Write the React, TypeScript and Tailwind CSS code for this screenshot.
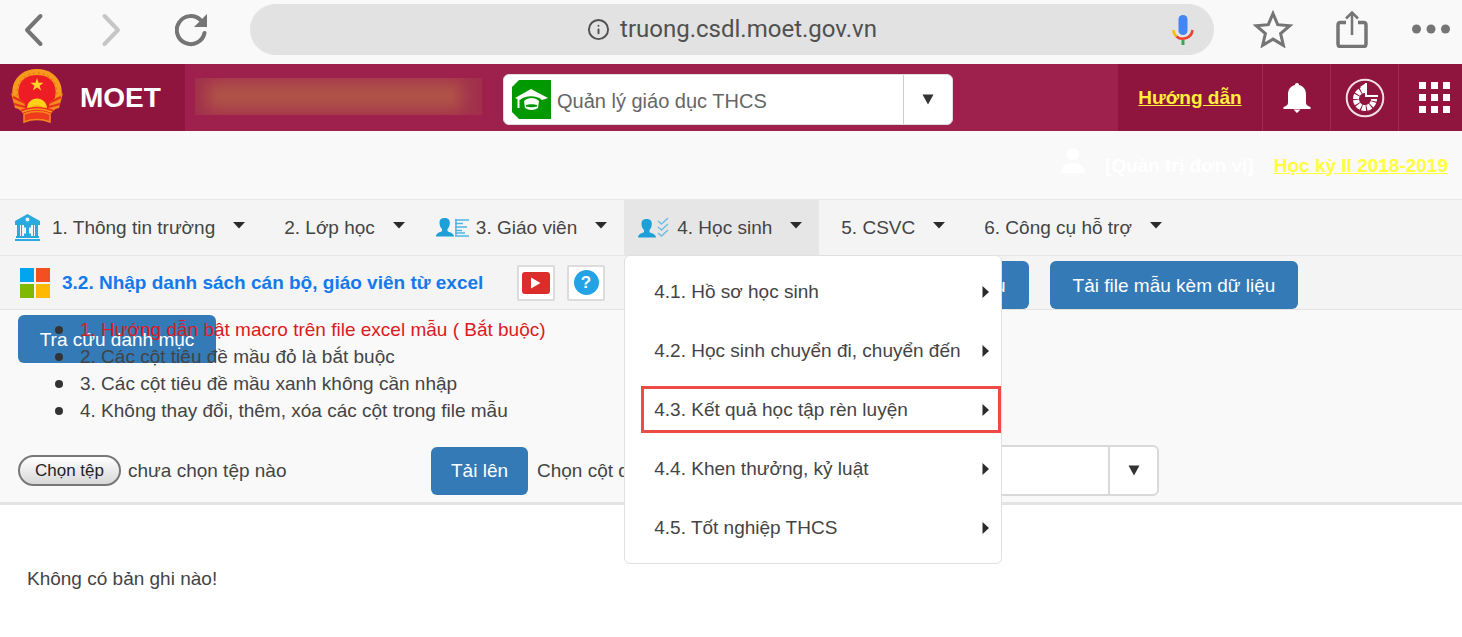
import { useState } from "react";
import { Info } from "lucide-react";

const menuItems = [
  "4.1. Hồ sơ học sinh",
  "4.2. Học sinh chuyển đi, chuyển đến",
  "4.3. Kết quả học tập rèn luyện",
  "4.4. Khen thưởng, kỷ luật",
  "4.5. Tốt nghiệp THCS",
];

const notes = [
  "1. Hướng dẫn bật macro trên file excel mẫu ( Bắt buộc)",
  "2. Các cột tiêu đề mầu đỏ là bắt buộc",
  "3. Các cột tiêu đề mầu xanh không cần nhập",
  "4. Không thay đổi, thêm, xóa các cột trong file mẫu",
];

function Caret() {
  return (
    <svg width="12" height="7" viewBox="0 0 12 7" className="mb-1 shrink-0" aria-hidden="true">
      <path d="M0 0h12L6 6.5z" fill="#2b2b2b" />
    </svg>
  );
}

function SelectArrow() {
  return (
    <svg width="12" height="11" viewBox="0 0 12 11" aria-hidden="true">
      <path d="M0.5 0.5h11L6 10.5z" fill="#333" />
    </svg>
  );
}

function Emblem() {
  return (
    <svg width="54" height="54" viewBox="0 0 54 54" className="mb-1" aria-hidden="true">
      <circle cx="27" cy="24" r="21" fill="#ee1c25" />
      <path d="M13 40C-1 28 4 3 27 3s28 25 14 37" fill="none" stroke="#f79a1c" strokeWidth="6" />
      <path d="M11 36C2 24 9 4 27 4s25 20 16 32" fill="none" stroke="#e8641a" strokeWidth="1" strokeDasharray="2 3" />
      <path d="M27 9l1.600 4.700h5l-4 3 1.500 4.800-4.100-2.900-4.100 2.900 1.500-4.800-4-3h5z" fill="#ffd52b" />
      <path d="M1 24l13 9 2 9-11-3zM53 24l-13 9-2 9 11-3z" fill="#f58a1c" />
      <path d="M3 28l12 6M4 35l11 3M51 28l-12 6M50 35l-11 3" stroke="#e8301c" strokeWidth="2" />
      <path d="M17 40c0-14 20-14 20 0z" fill="#ffd21a" />
      <path d="M20 40c3-5 11-5 14 0z" fill="#ff9c1a" />
      <path d="M10 41c11-4 23-4 34 0l-3 4H13z" fill="#ee2c1c" />
      <path d="M14 45c8-3 18-3 26 0v8c-8-3-18-3-26 0z" fill="#ee3c1c" stroke="#f58a1c" strokeWidth="1.500" />
      <path d="M12 43c10-4 20-4 30 0" fill="none" stroke="#f79a1c" strokeWidth="1.500" />
    </svg>
  );
}

function SchoolIcon() {
  return (
    <svg width="25" height="27" viewBox="0 0 25 27" className="mr-3 shrink-0" fill="#29a9e0" aria-hidden="true">
      <path fillRule="evenodd" d="M12.500 0L25 7v4H0V7zM12.500 3.500a2 2 0 100 4 2 2 0 000-4z" />
      <path d="M2 11h3v11H2zM20 11h3v11h-3zM1 22h23v2H1zM0 25h25v2H0zM6 11h1v11H6zM18 11h1v11h-1z" />
      <path d="M9 11h7v2.500h-2v6h2V22H9v-2.500h2v-6H9z" />
    </svg>
  );
}

function Bust() {
  return (
    <path
      d="M8.500 0C12 0 14 1.800 13.800 5c0 3-1.300 5-2.300 6v2c1 1.500 6.500 1.500 6.500 5.500H0C0 14.500 4.500 14.500 6 13v-2C4.800 10 3.500 8 3.500 5 3.300 1.800 5 0 8.500 0z"
      fill="#1d9fd8"
    />
  );
}

function TeacherIcon() {
  return (
    <svg width="34" height="19" viewBox="0 0 34 19" className="mr-[6px] shrink-0" aria-hidden="true">
      <Bust />
      <path d="M19 2h14M19 5.500h8M19 9h12M19 12.500h7M19 15h10M19 18h14M20 1v17" stroke="#4db5e4" strokeWidth="1.500" />
    </svg>
  );
}

function StudentIcon() {
  return (
    <svg width="31" height="21" viewBox="0 0 31 21" className="mr-2 shrink-0" aria-hidden="true">
      <g transform="translate(0 2)">
        <Bust />
      </g>
      <path d="M20 4l3.500 3L30 1M20 10l3.500 3L30 7M20 16l3.500 3L30 13" fill="none" stroke="#6cbfe4" strokeWidth="1.500" />
    </svg>
  );
}

function BrowserBar() {
  return (
    <div className="flex h-16 items-start bg-[#f9f9f9]">
      <div className="flex h-[59px] w-[250px] shrink-0 items-center pl-6">
        <button aria-label="Back">
          <svg width="20" height="34" viewBox="0 0 20 34" fill="none" stroke="#757575" strokeWidth="4" strokeLinecap="round" strokeLinejoin="round">
            <path d="M16.500 3L3 17l13.500 14" />
          </svg>
        </button>
        <button aria-label="Forward" className="ml-[57px]">
          <svg width="20" height="34" viewBox="0 0 20 34" fill="none" stroke="#c6c6c6" strokeWidth="4" strokeLinecap="round" strokeLinejoin="round">
            <path d="M3.500 3L17 17 3.500 31" />
          </svg>
        </button>
        <button aria-label="Reload" className="ml-[54px]">
          <svg width="33" height="34" viewBox="0 0 33 34">
            <path d="M29.500 20A14 14 0 1 1 26 7.500" fill="none" stroke="#757575" strokeWidth="4" strokeLinecap="round" />
            <path d="M32 1v13H19z" fill="#757575" />
          </svg>
        </button>
      </div>
      <div className="mt-1 flex h-[51px] flex-1 items-center rounded-full bg-[#e2e2e2] pl-[42px] pr-5">
        <div className="flex flex-1 items-center justify-center gap-[10px] text-[#505050]">
          <Info size={23} strokeWidth={2} />
          <span className="font-[family-name:Roboto,sans-serif] text-[24px]">truong.csdl.moet.gov.vn</span>
        </div>
        <button aria-label="Voice search">
          <svg width="22" height="32" viewBox="0 0 22 32" fill="none">
            <rect x="6.500" y="1" width="9" height="20" rx="4.500" fill="#4285f4" />
            <path d="M1.500 16c0 3 1.200 5 3 6.500" stroke="#fbbc05" strokeWidth="2.500" />
            <path d="M4.500 22.500c4 3.600 15 3.200 16-6.500" stroke="#ea4335" strokeWidth="2.500" />
            <path d="M11 26v5" stroke="#34a853" strokeWidth="3" />
          </svg>
        </button>
      </div>
      <div className="flex h-[58px] shrink-0 items-center pl-[39px] pr-3">
        <button aria-label="Bookmark">
          <svg width="40" height="38" viewBox="0 0 40 38" fill="none" stroke="#757575" strokeWidth="3">
            <path d="M20 3.500l4.700 11.200 12.100 1-9.200 7.900 2.800 11.800L20 29.100 9.600 35.400l2.800-11.800-9.200-7.900 12.100-1z" />
          </svg>
        </button>
        <button aria-label="Share" className="ml-[43px]">
          <svg width="32" height="38" viewBox="0 0 32 38" fill="none" stroke="#757575" strokeWidth="3.500">
            <path d="M10 12.500H4.500Q2 12.500 2 15v19q0 2.500 2.500 2.500h23Q30 36.500 30 34V15q0-2.500-2.500-2.500H22" />
            <path d="M16 25V3M10 8.500L16 2.500l6 6" strokeWidth="2.500" />
          </svg>
        </button>
        <button aria-label="More" className="ml-11">
          <svg width="38" height="10" viewBox="0 0 38 10" fill="#757575">
            <circle cx="4.500" cy="5" r="4.500" />
            <circle cx="19" cy="5" r="4.500" />
            <circle cx="33.500" cy="5" r="4.500" />
          </svg>
        </button>
      </div>
    </div>
  );
}

function Header() {
  return (
    <header className="flex h-[67px] items-stretch bg-[#9e214d]">
      <div className="flex w-[185px] shrink-0 items-center gap-4 bg-[#8f153f] pl-[10px] text-[28px] font-bold text-white">
        <Emblem />
        <span>MOET</span>
      </div>
      <div className="ml-[10px] mt-[14px] h-[37px] w-[287px] shrink-0 overflow-hidden bg-[#a2304c]">
        <div className="ml-3 mr-5 mt-1 h-7 bg-[#b05448] blur-[8px]" />
      </div>
      <div className="ml-[21px] mt-1 flex h-[51px] w-[450px] shrink-0 items-center self-center rounded-md border border-[#ddd] bg-white">
        <svg width="39" height="39" viewBox="0 0 39 39" className="ml-2 shrink-0" aria-hidden="true">
          <path d="M7 0h32v39H7L0 32V7z" fill="#009a00" />
          <path d="M3 18L19 9l17 9-6 2c-5-5-17-5-22 0z" fill="#fff" />
          <path d="M12 21c4-4 11-4 15 0l-1 7c-4 2.500-9 2.500-13 0zM14 26.500c3 1 8 1 11 0v-1.500c-3-1-8-1-11 0z" fill="#fff" fillRule="evenodd" />
          <path d="M6.500 19v9" stroke="#fff" strokeWidth="2" />
        </svg>
        <select aria-label="Phân hệ" className="h-full flex-1 appearance-none bg-transparent pl-[6px] pt-1 text-[20px] text-[#666]">
          <option>Quản lý giáo dục THCS</option>
        </select>
        <div className="pointer-events-none flex h-full w-[49px] items-center justify-center border-l border-[#ccc]">
          <SelectArrow />
        </div>
      </div>
      <div className="ml-auto flex bg-[#8f153f]">
        <div className="flex w-36 items-center justify-center">
          <a href="#huong-dan" className="text-[19px] font-bold text-[#ffee3a] underline">
            Hướng dẫn
          </a>
        </div>
        <button aria-label="Thông báo" className="flex w-[68px] items-center justify-center border-l border-[#9e2b53]">
          <svg width="28" height="30" viewBox="0 0 28 30" fill="#fff">
            <path d="M14 0c1.300 0 2 .8 2 2 4.500 1 7 4.500 7 9.500V20c0 1.800 1.500 3 4.500 4v2h-27v-2c3-1 4.500-2.200 4.500-4v-8.500C5 6.500 7.500 3 12 2c0-1.200.7-2 2-2zM10.500 26.500h7L14 30z" />
          </svg>
        </button>
        <button aria-label="Thống kê" className="flex w-[68px] items-center justify-center border-l border-[#9e2b53]">
          <svg width="40" height="40" viewBox="0 0 40 40" fill="none" stroke="#f3dfe6">
            <circle cx="20" cy="20" r="18.300" strokeWidth="2" />
            <path d="M20 12a9 9 0 1 0 9 9" strokeWidth="6" strokeDasharray="4 1" stroke="#fff" />
            <path d="M21 5v13h12" strokeWidth="2" stroke="#fff" />
            <path d="M15 9l6-4v9z" fill="#fff" stroke="none" />
          </svg>
        </button>
        <button aria-label="Ứng dụng" className="flex w-16 items-center justify-center border-l border-[#9e2b53] pl-2">
          <svg width="31" height="31" viewBox="0 0 31 31" fill="#fff">
            <path d="M0 0h7v7H0zM12 0h7v7h-7zM24 0h7v7h-7zM0 12h7v7H0zM12 12h7v7h-7zM24 12h7v7h-7zM0 24h7v7H0zM12 24h7v7h-7zM24 24h7v7h-7z" />
          </svg>
        </button>
      </div>
    </header>
  );
}

export default function App() {
  const [fileName, setFileName] = useState("");

  return (
    <div className="bg-white font-['Liberation_Sans',Arial,sans-serif] text-[19px] leading-[27px] text-[#444]">
      <BrowserBar />
      <Header />

      <div className="flex h-[68px] items-center justify-end bg-[#f9f9f9] pr-[14px] font-bold">
        <svg width="24" height="26" viewBox="0 0 24 26" fill="#fff" className="mb-2 mr-5 shrink-0" aria-hidden="true">
          <circle cx="12" cy="6" r="6" />
          <path d="M0 25c0-7 5-10 12-10s12 3 12 10z" />
        </svg>
        <span className="mr-5 text-white">[Quản trị đơn vị]</span>
        <a href="#hoc-ky" className="text-[#ffff3c] underline">
          Học kỳ II 2018-2019
        </a>
      </div>

      <nav className="flex h-[57px] border-y border-[#e6e6e6] bg-[#f4f4f4]">
        <button className="flex items-center pl-[15px] pr-[17px]">
          <SchoolIcon />
          <span className="mr-[18px]">1. Thông tin trường</span>
          <Caret />
        </button>
        <button className="flex items-center pl-[22px] pr-[17px]">
          <span className="mr-[18px]">2. Lớp học</span>
          <Caret />
        </button>
        <button className="flex items-center pl-[14px] pr-[17px]">
          <TeacherIcon />
          <span className="mr-[18px]">3. Giáo viên</span>
          <Caret />
        </button>
        <div className="relative flex">
          <button className="flex items-center bg-[#e6e6e6] pl-[14px] pr-[17px]">
            <StudentIcon />
            <span className="mr-[18px]">4. Học sinh</span>
            <Caret />
          </button>
          <div className="absolute left-0 top-full z-10 flex w-[378px] flex-col gap-3 rounded-md border border-[#e0e0e0] bg-white py-3">
            {menuItems.map((item, i) => (
              <a
                key={item}
                href={`#muc-${i + 1}`}
                className={`ml-4 flex h-[47px] items-center justify-between border-[3px] pl-[10px] pr-[9px] whitespace-nowrap ${
                  i === 2 ? "border-[#ee4b47]" : "border-transparent"
                }`}
              >
                {item}
                <svg width="7" height="12" viewBox="0 0 7 12" aria-hidden="true">
                  <path d="M0.500 0v12L7 6z" fill="#2b2b2b" />
                </svg>
              </a>
            ))}
          </div>
        </div>
        <button className="flex items-center pl-[22px] pr-[17px]">
          <span className="mr-[18px]">5. CSVC</span>
          <Caret />
        </button>
        <button className="flex items-center pl-[22px] pr-[17px]">
          <span className="mr-[18px]">6. Công cụ hỗ trợ</span>
          <Caret />
        </button>
      </nav>

      <div className="flex h-[54px] items-center border-b border-[#e3e3e3] bg-[#f4f4f4] pl-5">
        <svg width="30" height="30" viewBox="0 0 30 30" className="mr-3 shrink-0" aria-hidden="true">
          <path d="M0 0h14v14H0z" fill="#00a4ef" />
          <path d="M16 0h14v14H16z" fill="#f25022" />
          <path d="M0 16h14v14H0z" fill="#7fba00" />
          <path d="M16 16h14v14H16z" fill="#ffb900" />
        </svg>
        <h1 className="w-[432px] shrink-0 font-bold whitespace-nowrap text-[#1379ec]">3.2. Nhập danh sách cán bộ, giáo viên từ excel</h1>
        <button aria-label="Video hướng dẫn" className="ml-[23px] flex h-9 w-[38px] shrink-0 items-center justify-center rounded-xs border-2 border-[#dcdcdc] bg-white">
          <svg width="28" height="22" viewBox="0 0 28 22">
            <rect width="28" height="22" rx="3" fill="#dd2c2c" />
            <path d="M9 5.500v11l9.500-5.500z" fill="#fff" />
          </svg>
        </button>
        <button aria-label="Trợ giúp" className="ml-3 flex h-9 w-[38px] shrink-0 items-center justify-center rounded-xs border-2 border-[#dcdcdc] bg-white">
          <span className="flex h-[25px] w-[25px] items-center justify-center rounded-full bg-[#23a3e6] text-[17px] font-bold text-white">?</span>
        </button>
        <button className="ml-[279px] h-12 w-[145px] shrink-0 self-end rounded-md bg-[#337ab7] text-white">Tải file mẫu</button>
        <button className="ml-[21px] h-12 w-[248px] shrink-0 self-end rounded-md bg-[#337ab7] text-white">Tải file mẫu kèm dữ liệu</button>
      </div>

      <main>
        <section className="relative border-b-[3px] border-[#e3e3e3] bg-[#f9f9f9] py-[6px]">
          <button className="absolute left-[18px] top-[5px] h-12 w-[198px] rounded-md bg-[#337ab7] text-white">Tra cứu danh mục</button>
          <ul className="relative pl-[55px]">
            {notes.map((note, i) => (
              <li key={note} className="flex items-center gap-[17px]">
                <span className="h-2 w-2 rounded-full bg-[#333]" />
                <span className={i === 0 ? "text-[#dc1a22]" : ""}>{note}</span>
              </li>
            ))}
          </ul>
          <div className="mt-[21px] flex items-center pl-[18px]">
            <div className="flex w-[413px] shrink-0 items-center gap-[7px]">
              <label className="flex h-[31px] w-[103px] cursor-pointer items-center justify-center rounded-full border-2 border-[#777] bg-linear-to-b from-white to-[#d8d8d8] text-[17px] text-[#222]">
                Chọn tệp
                <input type="file" className="sr-only" onChange={(e) => setFileName(e.target.files?.[0]?.name ?? "")} />
              </label>
              <span>{fileName || "chưa chọn tệp nào"}</span>
            </div>
            <button className="h-12 w-[97px] shrink-0 rounded-md bg-[#337ab7] text-white">Tải lên</button>
            <label htmlFor="cot" className="ml-[9px] w-[172px] shrink-0">
              Chọn cột dữ liệu
            </label>
            <div className="flex h-[51px] w-[450px] shrink-0 rounded-md border-2 border-[#d9d9d9] bg-white">
              <select id="cot" className="flex-1 appearance-none bg-transparent pl-3" />
              <div className="pointer-events-none flex w-[49px] items-center justify-center border-l-2 border-[#d9d9d9]">
                <SelectArrow />
              </div>
            </div>
          </div>
        </section>
        <p className="px-[27px] pt-[60px]">Không có bản ghi nào!</p>
      </main>
    </div>
  );
}
